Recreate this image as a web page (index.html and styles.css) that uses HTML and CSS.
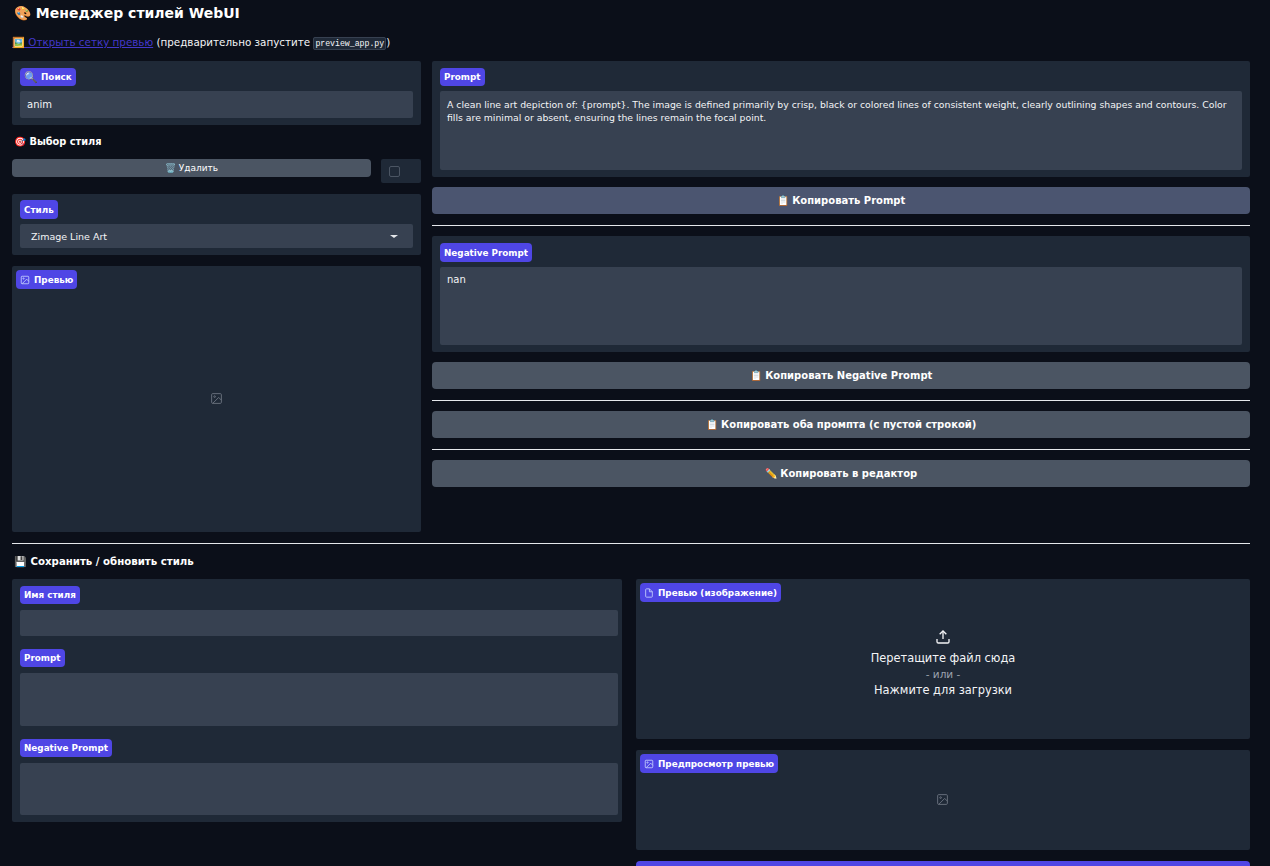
FILE: index.html
```html
<!DOCTYPE html>
<html lang="en">
<head>
  <meta charset="UTF-8" />
  <title>Менеджер стилей WebUI</title>
  <link rel="stylesheet" href="styles.css">
</head>
<body>
  <h1 class="title">🎨 Менеджер стилей WebUI</h1>
  <p class="intro"><a href="#">🖼️ Открыть сетку превью</a> (предварительно запустите <code>preview_app.py</code>)</p>

  <div class="top-row">
    <div class="col-left">
      <div class="panel search-panel">
        <span class="label label-search"><span class="emoji">🔍</span> Поиск</span>
        <div class="field field-search">anim</div>
      </div>
      <h3 class="heading heading-pick">🎯 Выбор стиля</h3>
      <div class="delete-row">
        <button class="btn btn-small">🗑️ Удалить</button>
        <div class="check-box"><span class="check"></span></div>
      </div>
      <div class="panel style-panel">
        <span class="label label-tall">Стиль</span>
        <div class="field field-select">Zimage Line Art<span class="caret"></span></div>
      </div>
      <div class="panel image-panel preview-panel">
        <span class="label label-tall">
          <svg class="label-svg" viewBox="0 0 24 24"><rect x="3" y="3" width="18" height="18" rx="2"/><circle cx="8.5" cy="8.5" r="1.5"/><path d="M21 15l-5-5L5 21"/></svg>
          Превью</span>
        <svg class="empty-icon" viewBox="0 0 24 24"><rect x="3" y="3" width="18" height="18" rx="2"/><circle cx="8.5" cy="8.5" r="1.5"/><path d="M21 15l-5-5L5 21"/></svg>
      </div>
    </div>

    <div class="col-right">
      <div class="panel prompt-panel">
        <span class="label">Prompt</span>
        <div class="field field-area">A clean line art depiction of: {prompt}. The image is defined primarily by crisp, black or colored lines of consistent weight, clearly outlining shapes and contours. Color fills are minimal or absent, ensuring the lines remain the focal point.</div>
      </div>
      <button class="btn btn-wide btn-first">📋 Копировать Prompt</button>
      <hr class="rule">
      <div class="panel prompt-panel">
        <span class="label label-tall">Negative Prompt</span>
        <div class="field field-area field-short">nan</div>
      </div>
      <button class="btn btn-wide">📋 Копировать Negative Prompt</button>
      <hr class="rule">
      <button class="btn btn-wide">📋 Копировать оба промпта (с пустой строкой)</button>
      <hr class="rule">
      <button class="btn btn-wide">✏️ Копировать в редактор</button>
    </div>
  </div>

  <hr class="rule rule-main">
  <h3 class="heading heading-save">💾 Сохранить / обновить стиль</h3>

  <div class="bottom-row">
    <div class="panel form-panel">
      <span class="label">Имя стиля</span>
      <div class="field field-name"></div>
      <span class="label">Prompt</span>
      <div class="field field-form"></div>
      <span class="label">Negative Prompt</span>
      <div class="field field-form field-last"></div>
    </div>

    <div class="col-upload">
      <div class="panel image-panel upload-panel">
        <span class="label label-tall">
          <svg class="label-svg" viewBox="0 0 24 24"><path d="M13 2H6a2 2 0 0 0-2 2v16a2 2 0 0 0 2 2h12a2 2 0 0 0 2-2V9z"/><path d="M13 2v7h7"/></svg>
          Превью (изображение)</span>
        <svg class="upload-icon" viewBox="0 0 24 24"><path d="M21 15v4a2 2 0 0 1-2 2H5a2 2 0 0 1-2-2v-4"/><path d="M17 8l-5-5-5 5"/><path d="M12 3v12"/></svg>
        <div class="drop-text">Перетащите файл сюда</div>
        <div class="drop-text drop-or">- или -</div>
        <div class="drop-text">Нажмите для загрузки</div>
      </div>
      <div class="panel image-panel small-preview">
        <span class="label label-tall">
          <svg class="label-svg" viewBox="0 0 24 24"><rect x="3" y="3" width="18" height="18" rx="2"/><circle cx="8.5" cy="8.5" r="1.5"/><path d="M21 15l-5-5L5 21"/></svg>
          Предпросмотр превью</span>
        <svg class="empty-icon" viewBox="0 0 24 24"><rect x="3" y="3" width="18" height="18" rx="2"/><circle cx="8.5" cy="8.5" r="1.5"/><path d="M21 15l-5-5L5 21"/></svg>
      </div>
      <div class="btn btn-primary"></div>
    </div>
  </div>
</body>
</html>
```

FILE: styles.css
```css
* {
  margin: 0;
  padding: 0;
  box-sizing: border-box;
}
html, body {
  height: 866px;
  overflow: hidden;
}
body {
  font-family: 'DejaVu Sans', sans-serif;
  font-size: 10px;
  background: #0b0f19;
  color: #f3f4f6;
  padding: 0 20px 0 12px;
}

/* Header */
.title {
  font-size: 14px;
  line-height: 20px;
  padding: 3px 0 0 2px;
  font-weight: 700;
  color: #fff;
}
.intro {
  font-size: 10.35px;
  line-height: 16px;
  margin-top: 11px;
  height: 27px;
}
.intro a {
  color: #4338ca;
}
code {
  font-family: 'Liberation Mono', monospace;
  font-size: 8.2px;
  background: #1f2937;
  border: 1px solid #374151;
  border-radius: 2px;
  padding: 1px;
}

/* Panels and fields */
.panel {
  background: #1f2937;
  border-radius: 2px;
  padding: 7px 8px;
}
.label {
  display: inline-flex;
  align-items: center;
  gap: 4px;
  height: 18px;
  padding: 0 4px;
  background: #4f46e5;
  color: #fff;
  font-size: 8.8px;
  font-weight: 700;
  border-radius: 4px;
  white-space: nowrap;
}
.label-tall {
  height: 19px;
}
.label-search {
  gap: 3px;
}
.emoji {
  font-size: 11px;
}
.label-svg {
  width: 10px;
  height: 10px;
  fill: none;
  stroke: #c7d2fe;
  stroke-width: 2;
}
.field {
  background: #374151;
  border-radius: 2px;
  margin-top: 5px;
  padding: 6px 7px;
  font-size: 10px;
  line-height: 13px;
}

/* Top row */
.top-row {
  display: flex;
  gap: 11px;
  height: 482px;
}
.col-left {
  width: 409px;
  flex: none;
  display: flex;
  flex-direction: column;
}
.col-right {
  flex: 1;
  display: flex;
  flex-direction: column;
}
.search-panel {
  height: 64px;
}
.field-search {
  height: 27px;
  line-height: 15px;
}
.heading {
  font-size: 10.2px;
  font-weight: 700;
  color: #fff;
  line-height: 16px;
}
.heading-pick {
  margin-top: 9px;
  padding-left: 2px;
  font-size: 9.8px;
}
.delete-row {
  display: flex;
  gap: 10px;
  margin-top: 9px;
  height: 24px;
}
.btn {
  display: block;
  border: none;
  border-radius: 4px;
  background: #4b5563;
  color: #fff;
  font-family: inherit;
  text-align: center;
}
.btn-small {
  flex: 1;
  height: 18px;
  font-size: 9px;
}
.check-box {
  width: 40px;
  background: #1f2937;
  border-radius: 2px;
  padding: 7px 8px;
}
.check {
  display: block;
  width: 11px;
  height: 11px;
  border: 1px solid #4b5563;
  border-radius: 2px;
  background: #1f2937;
}
.style-panel {
  height: 61px;
  margin-top: 11px;
  padding-top: 6px;
}
.field-select {
  display: flex;
  justify-content: space-between;
  align-items: center;
  height: 24px;
  padding: 0 15px 0 11px;
  font-size: 9.5px;
}
.caret {
  border-left: 4px solid transparent;
  border-right: 4px solid transparent;
  border-top: 3px solid #e5e7eb;
}
.image-panel {
  position: relative;
  padding: 4px;
}
.preview-panel {
  height: 266px;
  margin-top: 11px;
}
.empty-icon {
  position: absolute;
  left: 50%;
  top: 50%;
  width: 13px;
  height: 13px;
  margin: -7px 0 0 -7px;
  fill: none;
  stroke: #6b7280;
  stroke-width: 1.7;
}
.prompt-panel {
  height: 116px;
}
.field-area {
  height: 79px;
  padding-top: 7px;
  font-size: 9.3px;
}
.field-short {
  height: 78px;
  padding-top: 6px;
  font-size: 10px;
}
.btn-wide {
  height: 27px;
  font-size: 10px;
  font-weight: 700;
  width: 100%;
  flex: none;
}
.btn-first {
  background: #4b5570;
}
.col-right .panel + .btn {
  margin-top: 10px;
}
.rule {
  border: none;
  border-top: 1px solid #e5e7eb;
  margin: 11px 0 10px;
  flex: none;
}
.rule-main {
  margin: 0;
}

/* Bottom row */
.heading-save {
  margin-top: 10px;
  padding-left: 2px;
}
.bottom-row {
  display: flex;
  gap: 14px;
  margin-top: 9px;
  align-items: flex-start;
}
.form-panel {
  width: 610px;
  flex: none;
  height: 243px;
  padding-right: 4px;
}
.form-panel .field {
  margin-top: 6px;
}
.field-name {
  height: 26px;
  margin-bottom: 13px;
}
.field-form {
  height: 53px;
  margin-bottom: 13px;
}
.field-last {
  height: 52px;
  margin-bottom: 0;
}
.col-upload {
  flex: 1;
  display: flex;
  flex-direction: column;
  gap: 11px;
}
.upload-panel {
  height: 160px;
  display: flex;
  flex-direction: column;
  align-items: center;
}
.upload-panel .label {
  align-self: flex-start;
}
.upload-icon {
  width: 16px;
  height: 16px;
  margin-top: 27px;
  margin-bottom: 5px;
  fill: none;
  stroke: #f3f4f6;
  stroke-width: 2;
}
.drop-text {
  font-size: 11.4px;
  line-height: 16px;
}
.drop-or {
  color: #9ca3af;
  font-size: 10.5px;
}
.small-preview {
  height: 100px;
}
.btn-primary {
  height: 27px;
  background: #4f46e5;
}
```
